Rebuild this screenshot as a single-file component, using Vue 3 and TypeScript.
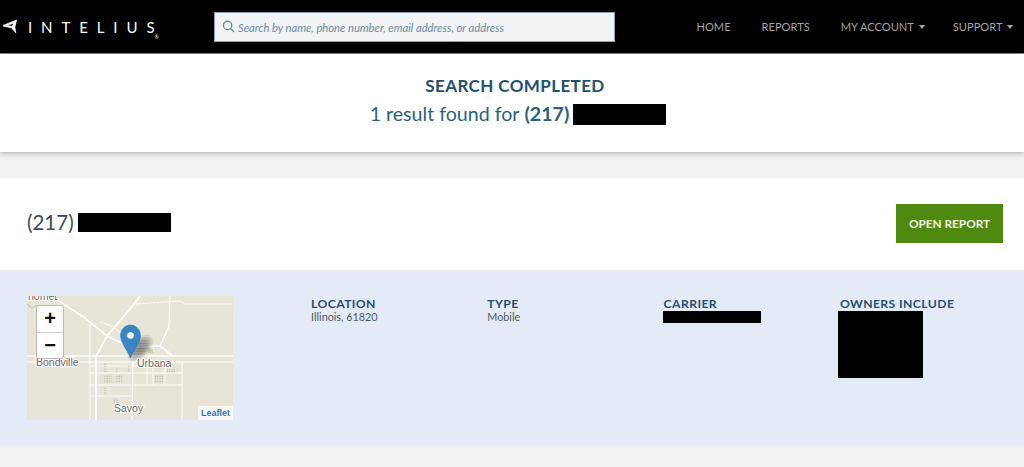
<script setup lang="ts">
interface NavItem { label: string; caret: boolean }
interface Detail { label: string; value?: string; redactClass?: string }

const navItems: NavItem[] = [
  { label: 'HOME', caret: false },
  { label: 'REPORTS', caret: false },
  { label: 'MY ACCOUNT', caret: true },
  { label: 'SUPPORT', caret: true },
]

const details: Detail[] = [
  { label: 'LOCATION', value: 'Illinois, 61820' },
  { label: 'TYPE', value: 'Mobile' },
  { label: 'CARRIER', redactClass: 'redact-carrier' },
  { label: 'OWNERS INCLUDE', redactClass: 'redact-owners' },
]

const dotPatches: number[][] = [
  [76, 79, 9, 8], [89, 79, 7, 8], [128, 79, 8, 8], [140, 73, 8, 4],
  [76, 91, 4, 8], [76, 67, 4, 9], [88, 71, 3, 5], [100, 69, 3, 7], [86, 102, 5, 5],
]
</script>

<template>
  <div class="page">
    <header class="topbar">
      <div class="logo">
        <svg class="logo-icon" width="19" height="16" viewBox="0 0 19 16">
          <path d="M1 6.4 L14.6 1 L12.9 8 L13.8 13.8 L9.4 8.8 L1.4 7.2 Z M4.6 6.6 L9.8 7.3 L12.4 4 Z" fill="#fff" fill-rule="evenodd" stroke="#fff" stroke-width="0.7" stroke-linejoin="round" />
        </svg>
        <span class="logo-text">INTELIUS</span><span class="logo-reg">®</span>
      </div>
      <div class="search">
        <svg class="search-icon" width="13" height="13" viewBox="0 0 13 13" fill="none" stroke="#6d8ba0" stroke-width="1.3">
          <circle cx="5.6" cy="5.4" r="4.2" />
          <path d="M8.6 8.5 L12 12" />
        </svg>
        <span class="search-placeholder">Search by name, phone number, email address, or address</span>
      </div>
      <nav class="nav">
        <span v-for="item in navItems" :key="item.label" class="nav-item">
          {{ item.label }}<i v-if="item.caret" class="caret"></i>
        </span>
      </nav>
    </header>

    <section class="summary">
      <h1>SEARCH COMPLETED</h1>
      <p class="summary-line">
        1 result found for <strong>(217)</strong><span class="redact redact-summary"></span>
      </p>
    </section>

    <section class="result">
      <div class="result-head">
        <div class="phone">(217)<span class="redact redact-phone"></span></div>
        <button class="open-btn" type="button">OPEN REPORT</button>
      </div>
      <div class="result-body">
        <div class="map">
          <svg class="map-art" width="206" height="124" viewBox="0 0 206 124">
            <defs>
              <pattern id="dots" width="2.4" height="2.4" patternUnits="userSpaceOnUse">
                <circle cx="1" cy="1" r="0.6" fill="#a8a49a" />
              </pattern>
              <pattern id="shadowDots" width="1.6" height="1.6" patternUnits="userSpaceOnUse">
                <circle cx="0.8" cy="0.8" r="0.7" fill="#333" />
              </pattern>
              <radialGradient id="fade">
                <stop offset="0" stop-color="#fff" stop-opacity="1" />
                <stop offset="0.5" stop-color="#fff" stop-opacity="0.75" />
                <stop offset="1" stop-color="#fff" stop-opacity="0" />
              </radialGradient>
              <mask id="shadowMask">
                <ellipse cx="113" cy="52" rx="17" ry="10" fill="url(#fade)" transform="rotate(-45 113 52)" />
              </mask>
            </defs>
            <rect width="206" height="124" fill="#e8e4d8" />
            <path d="M0 8 L5 12 L10 9" fill="none" stroke="#a8c4dc" stroke-width="1" />
            <g fill="none" stroke="#fff" stroke-width="0.9">
              <path d="M63 28 V124" />
              <path d="M63 77 H155" />
              <path d="M63 89 H155" />
              <path d="M63 70 H120" />
              <path d="M155 66 V124" />
              <path d="M120 66 V89" />
              <path d="M126 66 V89" />
              <path d="M138 66 V89" />
              <path d="M63 100 H103" />
              <path d="M73 26 L85 30 L105 46" />
              <path d="M108 8 L153 5 L158 8 H206" stroke-dasharray="3 0.6" />
            </g>
            <g fill="none" stroke="#fff" stroke-width="1.7">
              <path d="M0 60 H206" />
              <path d="M0 66 H206" stroke-width="1.1" />
              <path d="M113 0 L103 13 L80 40 L69 60 V124" />
              <path d="M0 -2 L32 5 L58 22 L80 40 L103 51 L133 50 L146 60" />
              <path d="M143 0 L142 30 L133 50" stroke-width="1.2" />
              <path d="M106 66 L105 124" stroke-width="1.1" />
            </g>
            <rect v-for="(p, i) in dotPatches" :key="i" :x="p[0]" :y="p[1]" :width="p[2]" :height="p[3]" fill="url(#dots)" />
            <rect x="121" y="53" width="5" height="4" fill="#c8d6a8" />
            <rect x="95" y="30" width="40" height="40" fill="url(#shadowDots)" mask="url(#shadowMask)" />
            <path d="M103.5 62 C101 55 93.5 47 93.5 39.5 C93.5 33.5 98 29 103.5 29 C109 29 113.5 33.5 113.5 39.5 C113.5 47 106 55 103.5 62 Z" fill="#3a85c4" stroke="#2f74ae" stroke-width="0.5" />
            <circle cx="103.5" cy="39.5" r="3.3" fill="#fff" />
            <text class="place" x="9" y="70">Bondville</text>
            <text class="place" x="110" y="70.5">Urbana</text>
            <text class="place" x="87" y="116">Savoy</text>
            <text class="place" x="1" y="3.5">homet</text>
          </svg>
          <div class="zoom">
            <span class="zoom-btn">+</span>
            <span class="zoom-btn minus">−</span>
          </div>
          <span class="attribution">Leaflet</span>
        </div>
        <div class="details">
          <div v-for="d in details" :key="d.label" class="detail">
            <div class="detail-label">{{ d.label }}</div>
            <div v-if="d.value" class="detail-value">{{ d.value }}</div>
            <div v-else class="redact" :class="d.redactClass"></div>
          </div>
        </div>
      </div>
    </section>
    <div class="tail"></div>
  </div>
</template>

<style>
html, body { margin: 0; background: #f2f2f2; }
</style>

<style scoped>
.page {
  font-family: Lato, "Open Sans", sans-serif;
  background: #f2f2f2;
  height: 467px;
  overflow: hidden;
  color: #24506f;
}
.topbar {
  height: 53px;
  background: #000;
  border-bottom: 1px solid #888;
  display: flex;
  align-items: center;
  padding-left: 2px;
}
.logo {
  flex: none;
  width: 212px;
  display: flex;
  align-items: center;
  color: #fff;
}
.logo-icon { margin-right: 7px; }
.logo-text {
  font-size: 15px;
  letter-spacing: 8.9px;
  margin-right: -9px;
}
.logo-reg { font-size: 5px; align-self: flex-start; margin-top: 20px; }
.search {
  flex: none;
  box-sizing: border-box;
  width: 401px;
  height: 30px;
  background: #f1f3f4;
  border: 1px solid #8aa0b2;
  display: flex;
  align-items: center;
  padding-left: 7px;
}
.search-icon { margin-right: 3px; flex: none; }
.search-placeholder {
  font-style: italic;
  font-size: 11.2px;
  color: #6d8ba0;
  white-space: nowrap;
  padding-top: 1px;
}
.nav {
  flex: none;
  display: flex;
  align-items: center;
  margin-left: 81.5px;
}
.nav-item {
  font-size: 11.1px;
  color: #a8a39b;
  white-space: nowrap;
  margin-right: 31px;
}
.nav-item:last-child { margin-right: 0; }
.caret {
  display: inline-block;
  width: 0;
  height: 0;
  border-left: 3.5px solid transparent;
  border-right: 3.5px solid transparent;
  border-top: 4px solid #a8a39b;
  margin: 0 -3px 0 5px;
  vertical-align: 2px;
}
.summary {
  background: #fff;
  height: 98px;
  box-shadow: 0 1px 6px rgba(0, 0, 0, 0.3);
  text-align: center;
  position: relative;
  padding-top: 22px;
  box-sizing: border-box;
}
.summary h1 {
  margin: 0;
  padding-left: 6px;
  font-size: 17px;
  line-height: 20px;
  font-weight: 700;
  letter-spacing: 0.4px;
  color: #24506f;
}
.summary-line {
  margin: 6px 0 0;
  padding-left: 12px;
  font-size: 19.6px;
  line-height: 24px;
  color: #2b5f82;
  display: flex;
  justify-content: center;
  align-items: center;
}
.summary-line strong { margin-left: 5px; font-weight: 700; }
.redact { display: block; background: #000; }
.redact-summary { width: 93px; height: 21px; margin-left: 4px; }
.result {
  margin-top: 26px;
}
.result-head {
  background: #fff;
  height: 92px;
  display: flex;
  align-items: center;
  justify-content: space-between;
  padding: 0 21px 0 27px;
}
.phone {
  display: flex;
  align-items: center;
  font-size: 20.5px;
  color: #3f4a52;
  margin-top: -4px;
}
.redact-phone { width: 93px; height: 19px; margin-left: 4px; }
.open-btn {
  width: 107px;
  height: 39px;
  margin: 0 0 1px;
  background: #4f8a10;
  color: #f2f2ea;
  border: none;
  font-family: inherit;
  font-size: 11.8px;
  font-weight: 700;
  padding: 0;
}
.result-body {
  background: #e4ebf6;
  height: 176px;
  display: flex;
  padding: 26px 0 0 27px;
  box-sizing: border-box;
}
.map {
  width: 206px;
  height: 124px;
  position: relative;
  overflow: hidden;
  flex: none;
}
.map-art { display: block; }
.place {
  font-family: "Liberation Sans", sans-serif;
  font-size: 10.5px;
  fill: #666;
  stroke: #fff;
  stroke-width: 2px;
  paint-order: stroke;
}
.zoom {
  position: absolute;
  left: 9px;
  top: 9px;
  width: 26px;
  display: flex;
  flex-direction: column;
  background: #fff;
  border: 1px solid #bbb;
  border-radius: 3px;
}
.zoom-btn {
  height: 25.5px;
  display: flex;
  align-items: center;
  justify-content: center;
  font-family: "Liberation Sans", sans-serif;
  font-size: 20px;
  font-weight: 700;
  color: #111;
}
.zoom-btn.minus { border-top: 1px solid #ccc; }
.attribution {
  position: absolute;
  right: 0;
  bottom: 0;
  height: 14px;
  line-height: 14px;
  padding: 0 3px;
  background: rgba(255, 255, 255, 0.75);
  font-family: "Liberation Sans", sans-serif;
  font-size: 9px;
  font-weight: 700;
  color: #2b78b8;
}
.details {
  display: flex;
  margin-left: 78px;
}
.detail { width: 176.3px; }
.detail-label {
  font-size: 12.2px;
  line-height: 13px;
  font-weight: 700;
  letter-spacing: 0.4px;
  color: #24506f;
  white-space: nowrap;
  margin-top: 1px;
}
.detail-value {
  font-size: 10.8px;
  line-height: 13px;
  color: #4f5b63;
}
.redact-carrier { width: 98px; height: 12px; margin: 1px 0 0 -1px; }
.redact-owners { width: 85px; height: 67px; margin: 1px 0 0 -2px; }
</style>
